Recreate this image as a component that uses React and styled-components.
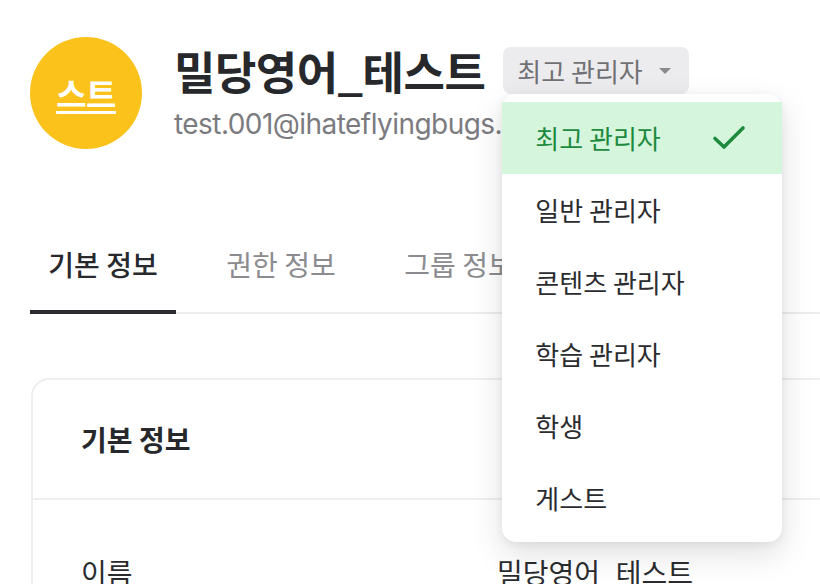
import React from "react";
import styled, { createGlobalStyle } from "styled-components";

const Global = createGlobalStyle`
  html, body { margin: 0; padding: 0; background: #fff; overflow: hidden; }
  body { font-family: Inter, "Noto Sans CJK KR", sans-serif; width: 820px; height: 584px; }
  * { box-sizing: border-box; }
`;

const Page = styled.div`
  width: 820px;
  height: 584px;
  overflow: hidden;
  padding: 37px 0 0 30px;
`;

const Header = styled.div`
  display: flex;
  align-items: flex-start;
  gap: 32px;
`;

const Avatar = styled.div`
  width: 112px;
  height: 112px;
  border-radius: 50%;
  background: #fbc21c;
  display: flex;
  align-items: center;
  justify-content: center;
  flex-shrink: 0;
`;

const AvatarText = styled.span`
  color: #fff;
  font-family: "Noto Sans CJK KR", sans-serif;
  font-weight: 700;
  font-size: 33px;
  text-decoration: underline;
  text-decoration-thickness: 3px;
  text-underline-offset: 4px;
  letter-spacing: -0.5px;
`;

const Info = styled.div`
  display: flex;
  flex-direction: column;
  padding-top: 4px;
`;

const TitleRow = styled.div`
  display: flex;
  align-items: center;
  gap: 18px;
  height: 58px;
`;

const Title = styled.h1`
  margin: 0;
  font-family: "Noto Sans CJK KR", sans-serif;
  font-weight: 700;
  font-size: 45px;
  color: #26282c;
  letter-spacing: -0.5px;
  line-height: 1;
`;

const RoleWrap = styled.div`
  position: relative;
`;

const RoleBadge = styled.div`
  display: flex;
  align-items: center;
  gap: 16px;
  height: 47px;
  padding: 0 18px 0 14px;
  background: #ececee;
  border-radius: 8px;
  color: #717175;
  font-family: "Noto Sans CJK KR", sans-serif;
  font-size: 26px;
`;

const Caret = styled.span`
  width: 0;
  height: 0;
  border-left: 6px solid transparent;
  border-right: 6px solid transparent;
  border-top: 6px solid #8a8a8e;
  margin-top: 2px;
`;

const Email = styled.div`
  margin-top: 8px;
  font-family: Inter, sans-serif;
  font-size: 28px;
  color: #7b7b7f;
  letter-spacing: -0.55px;
  white-space: nowrap;
`;

const Menu = styled.ul`
  position: absolute;
  left: -1px;
  top: 47px;
  width: 280px;
  margin: 0;
  padding: 8px 0;
  list-style: none;
  background: #fff;
  border-radius: 14px;
  box-shadow: 0 12px 32px rgba(0, 0, 0, 0.13), 0 2px 8px rgba(0, 0, 0, 0.06);
  z-index: 10;
`;

const MenuItem = styled.li`
  display: flex;
  align-items: center;
  justify-content: space-between;
  height: 72px;
  padding: 0 36px 0 33px;
  font-family: "Noto Sans CJK KR", sans-serif;
  font-size: 26px;
  color: ${(p) => (p.$active ? "#1e8a3e" : "#2b2c30")};
  background: ${(p) => (p.$active ? "#d5f5dd" : "transparent")};
`;

const Tabs = styled.div`
  display: flex;
  gap: 32px;
  margin-top: 77px;
  border-bottom: 2px solid #ededed;
`;

const Tab = styled.div`
  width: 146px;
  display: flex;
  justify-content: center;
  padding: 18px 0 26px;
  margin-bottom: -2px;
  font-family: "Noto Sans CJK KR", sans-serif;
  font-size: 28px;
  font-weight: ${(p) => (p.$active ? 500 : 400)};
  color: ${(p) => (p.$active ? "#27292d" : "#8c8c90")};
  border-bottom: 4px solid ${(p) => (p.$active ? "#2b2c30" : "transparent")};
  white-space: nowrap;
`;

const Card = styled.section`
  margin: 64px -80px 0 1px;
  border: 2px solid #eeeeee;
  border-radius: 18px;
`;

const CardHeader = styled.div`
  height: 120px;
  display: flex;
  align-items: center;
  padding-left: 48px;
  border-bottom: 2px solid #eeeeee;
  font-family: "Noto Sans CJK KR", sans-serif;
  font-weight: 700;
  font-size: 28px;
  color: #26282c;
`;

const Row = styled.div`
  display: grid;
  grid-template-columns: 416px 1fr;
  padding: 52px 0 40px 48px;
  font-family: "Noto Sans CJK KR", sans-serif;
  font-size: 28px;
  color: #2b2c30;
`;

const Check = () => (
  <svg width="34" height="28" viewBox="0 0 34 28" fill="none">
    <path d="M3 14.5 L12 23 L31 4" stroke="#1e8a3e" strokeWidth="3.6" strokeLinecap="round" strokeLinejoin="round" />
  </svg>
);

const roles = ["최고 관리자", "일반 관리자", "콘텐츠 관리자", "학습 관리자", "학생", "게스트"];

export default function App() {
  return (
    <Page>
      <Global />
      <Header>
        <Avatar>
          <AvatarText>스트</AvatarText>
        </Avatar>
        <Info>
          <TitleRow>
            <Title>밀당영어_테스트</Title>
            <RoleWrap>
              <RoleBadge>
                최고 관리자
                <Caret />
              </RoleBadge>
              <Menu>
                {roles.map((r, i) => (
                  <MenuItem key={r} $active={i === 0}>
                    {r}
                    {i === 0 && <Check />}
                  </MenuItem>
                ))}
              </Menu>
            </RoleWrap>
          </TitleRow>
          <Email>test.001@ihateflyingbugs.com</Email>
        </Info>
      </Header>
      <Tabs>
        <Tab $active>기본 정보</Tab>
        <Tab>권한 정보</Tab>
        <Tab>그룹 정보</Tab>
      </Tabs>
      <Card>
        <CardHeader>기본 정보</CardHeader>
        <Row>
          <span>이름</span>
          <span>밀당영어_테스트</span>
        </Row>
      </Card>
    </Page>
  );
}
